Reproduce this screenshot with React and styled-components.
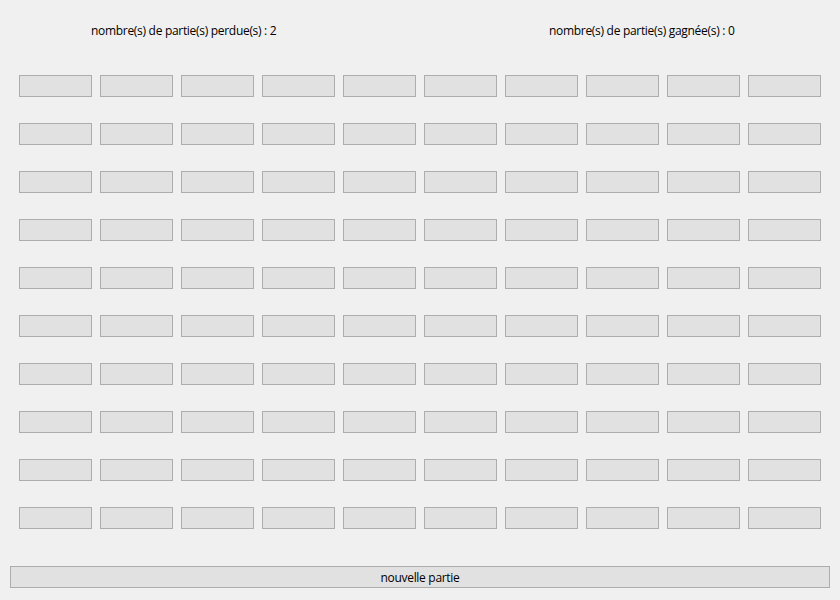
import styled, { createGlobalStyle } from "styled-components";

const GlobalStyle = createGlobalStyle`
  html, body {
    margin: 0;
    padding: 0;
    background: #f0f0f0;
  }
  body {
    font-family: "Open Sans", "Noto Sans", "Liberation Sans", sans-serif;
    font-size: 12px;
    color: #000;
  }
`;

const Window = styled.div`
  width: 840px;
  height: 600px;
  background: #f0f0f0;
  display: flex;
  flex-direction: column;
  box-sizing: border-box;
`;

const Header = styled.div`
  display: flex;
  height: 62px;
  align-items: center;
  padding-left: 91px;
`;

const Score = styled.span`
  display: inline-block;
  width: ${(p) => p.$width || "auto"};
  line-height: 16px;
  white-space: nowrap;
  letter-spacing: -0.3px;
`;

const Grid = styled.div`
  display: grid;
  grid-template-columns: repeat(10, 73px);
  grid-auto-rows: 22px;
  column-gap: 8px;
  row-gap: 26px;
  padding: 13px 0 0 19px;
`;

const Cell = styled.button`
  box-sizing: border-box;
  width: 73px;
  height: 22px;
  background: #e1e1e1;
  border: 1px solid #adadad;
  padding: 0;
  margin: 0;
`;

const NewGame = styled.button`
  box-sizing: border-box;
  width: 820px;
  height: 22px;
  margin: 37px 0 0 10px;
  background: #e1e1e1;
  border: 1px solid #adadad;
  padding: 0;
  font-family: inherit;
  font-size: 12px;
  letter-spacing: -0.3px;
  color: #000;
`;

export default function App() {
  const cells = Array.from({ length: 100 }, (_, i) => i);

  return (
    <>
      <GlobalStyle />
      <Window>
        <Header>
          <Score $width="458px">nombre(s) de partie(s) perdue(s) : 2</Score>
          <Score>nombre(s) de partie(s) gagnée(s) : 0</Score>
        </Header>
        <Grid>
          {cells.map((i) => (
            <Cell key={`cell-${i}`} />
          ))}
        </Grid>
        <NewGame>nouvelle partie</NewGame>
      </Window>
    </>
  );
}
